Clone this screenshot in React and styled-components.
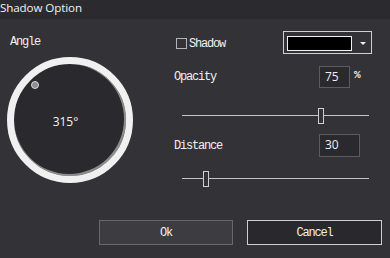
import React from "react";
import styled, { createGlobalStyle } from "styled-components";

const GlobalStyle = createGlobalStyle`
  html, body {
    margin: 0;
    padding: 0;
    background: #333237;
  }
  body {
    width: 390px;
    height: 258px;
    overflow: hidden;
  }
`;

const Window = styled.div`
  width: 390px;
  height: 258px;
  background: #333237;
  color: #ececec;
  display: flex;
  flex-direction: column;
`;

const TitleBar = styled.div`
  height: 19px;
  background: #2b2a2f;
  color: #f2f2f2;
  font-family: "Open Sans", sans-serif;
  font-size: 11.6px;
  letter-spacing: -0.1px;
  line-height: 16px;
`;

const Body = styled.div`
  height: 201px;
  display: flex;
`;

const LeftPane = styled.div`
  width: 174px;
  padding: 17px 0 0 7px;
  box-sizing: border-box;
  display: flex;
  flex-direction: column;
  gap: 9px;
`;

const Label = styled.span`
  font-family: "Liberation Mono", monospace;
  font-size: 12px;
  letter-spacing: -1.2px;
  line-height: 12px;
  color: #f0f0f0;
  margin-left: ${(p) => p.$indent || 0}px;
`;

const Dial = styled.div`
  position: relative;
  width: 126px;
  height: 126px;
  box-sizing: border-box;
  border-radius: 50%;
  border: 7px solid #f0f0f0;
  background: #2a292d;
  box-shadow: inset -1px -1px 0 1px #8c8c8c;
  display: flex;
  align-items: center;
  justify-content: center;
`;

const DialValue = styled.span`
  font-family: "Open Sans", sans-serif;
  font-size: 12px;
  color: #f4f4f4;
  margin-left: -9px;
  margin-top: 2px;
`;

const Knob = styled.span`
  position: absolute;
  width: 8px;
  height: 8px;
  margin: -4px 0 0 -4px;
  border-radius: 50%;
  box-sizing: border-box;
  background: #8e8e8e;
  border: 1.5px solid #d8d8d8;
`;

const RightPane = styled.div`
  width: 198px;
  padding-top: 12px;
  display: flex;
  flex-direction: column;
`;

const ShadowRow = styled.div`
  height: 23px;
  display: flex;
  align-items: center;
  justify-content: space-between;
`;

const CheckLabel = styled.label`
  display: flex;
  align-items: center;
  gap: 2px;
  margin-left: 2px;
  margin-top: 2px;
`;

const Check = styled.span`
  width: 11px;
  height: 11px;
  box-sizing: border-box;
  border: 1px solid #b4b4b4;
`;

const ColorSelect = styled.div`
  width: 89px;
  height: 23px;
  box-sizing: border-box;
  border: 1px solid #cfcfcf;
  padding: 4px 0 0 3px;
  display: flex;
  align-items: flex-start;
  gap: 8px;
`;

const Swatch = styled.span`
  width: 65px;
  height: 15px;
  box-sizing: border-box;
  border: 1px solid #f0f0f0;
  background: ${(p) => p.$color};
`;

const Caret = styled.span`
  margin-top: 6px;
  width: 0;
  height: 0;
  border-left: 3px solid transparent;
  border-right: 3px solid transparent;
  border-top: 3px solid #f0f0f0;
`;

const FieldRow = styled.div`
  display: grid;
  grid-template-columns: 145px auto 1fr;
  align-items: center;
  margin-top: ${(p) => p.$top}px;
`;

const NumberBox = styled.div`
  width: ${(p) => p.$width}px;
  height: ${(p) => p.$height}px;
  box-sizing: border-box;
  border: 1px solid #5c5b60;
  background: #2a292d;
  font-family: "Open Sans", sans-serif;
  font-size: 12px;
  line-height: ${(p) => p.$height - 3}px;
  padding-left: 5px;
  color: #eeeeee;
`;

const Unit = styled.span`
  font-family: "Liberation Mono", monospace;
  font-size: 11px;
  font-weight: bold;
  margin-left: 4px;
  margin-top: -4px;
  color: #f0f0f0;
`;

const Slider = styled.div`
  position: relative;
  width: 187px;
  height: 16px;
  margin: ${(p) => p.$top}px 0 0 8px;
  &::before {
    content: "";
    position: absolute;
    left: 0;
    right: 0;
    top: 7px;
    height: 1px;
    background: #c4c4c4;
  }
`;

const Thumb = styled.span`
  position: absolute;
  top: 0;
  width: 6px;
  height: 16px;
  box-sizing: border-box;
  border: 1px solid #cfcfcf;
  background: #333237;
`;

const Footer = styled.div`
  display: flex;
  justify-content: flex-end;
  gap: 14px;
  padding-right: 8px;
`;

const Button = styled.button`
  width: ${(p) => p.$width}px;
  height: 25px;
  box-sizing: border-box;
  border: 1px solid ${(p) => (p.$primary ? "#cfcfcf" : "#68676c")};
  background: ${(p) => (p.$primary ? "#29282c" : "#3d3c41")};
  color: #f0f0f0;
  font-family: "Liberation Mono", monospace;
  font-size: 12px;
  letter-spacing: -1.2px;
  padding: 0;
`;

const SliderControl = ({ fraction, top }) => (
  <Slider $top={top}>
    <Thumb style={{ left: `${fraction * 181}px` }} />
  </Slider>
);

const AngleDial = ({ angle }) => {
  const rad = ((angle - 90) * Math.PI) / 180;
  const r = 49;
  return (
    <Dial>
      <Knob style={{ left: `${56 + r * Math.cos(rad)}px`, top: `${56 + r * Math.sin(rad)}px` }} />
      <DialValue>{angle}°</DialValue>
    </Dial>
  );
};

const App = () => {
  const opacity = 75;
  const distance = 30;
  return (
    <>
      <GlobalStyle />
      <Window>
        <TitleBar>Shadow Option</TitleBar>
        <Body>
          <LeftPane>
            <Label $indent={3}>Angle</Label>
            <AngleDial angle={315} />
          </LeftPane>
          <RightPane>
            <ShadowRow>
              <CheckLabel>
                <Check />
                <Label>Shadow</Label>
              </CheckLabel>
              <ColorSelect>
                <Swatch $color="#000000" />
                <Caret />
              </ColorSelect>
            </ShadowRow>
            <FieldRow $top={12}>
              <Label>Opacity</Label>
              <NumberBox $width={31} $height={22}>{opacity}</NumberBox>
              <Unit>%</Unit>
            </FieldRow>
            <SliderControl fraction={opacity / 100} top={20} />
            <FieldRow $top={10}>
              <Label>Distance</Label>
              <NumberBox $width={41} $height={23}>{distance}</NumberBox>
            </FieldRow>
            <SliderControl fraction={distance / 255} top={14} />
          </RightPane>
        </Body>
        <Footer>
          <Button $width={134}>Ok</Button>
          <Button $width={135} $primary>Cancel</Button>
        </Footer>
      </Window>
    </>
  );
};

export default App;
